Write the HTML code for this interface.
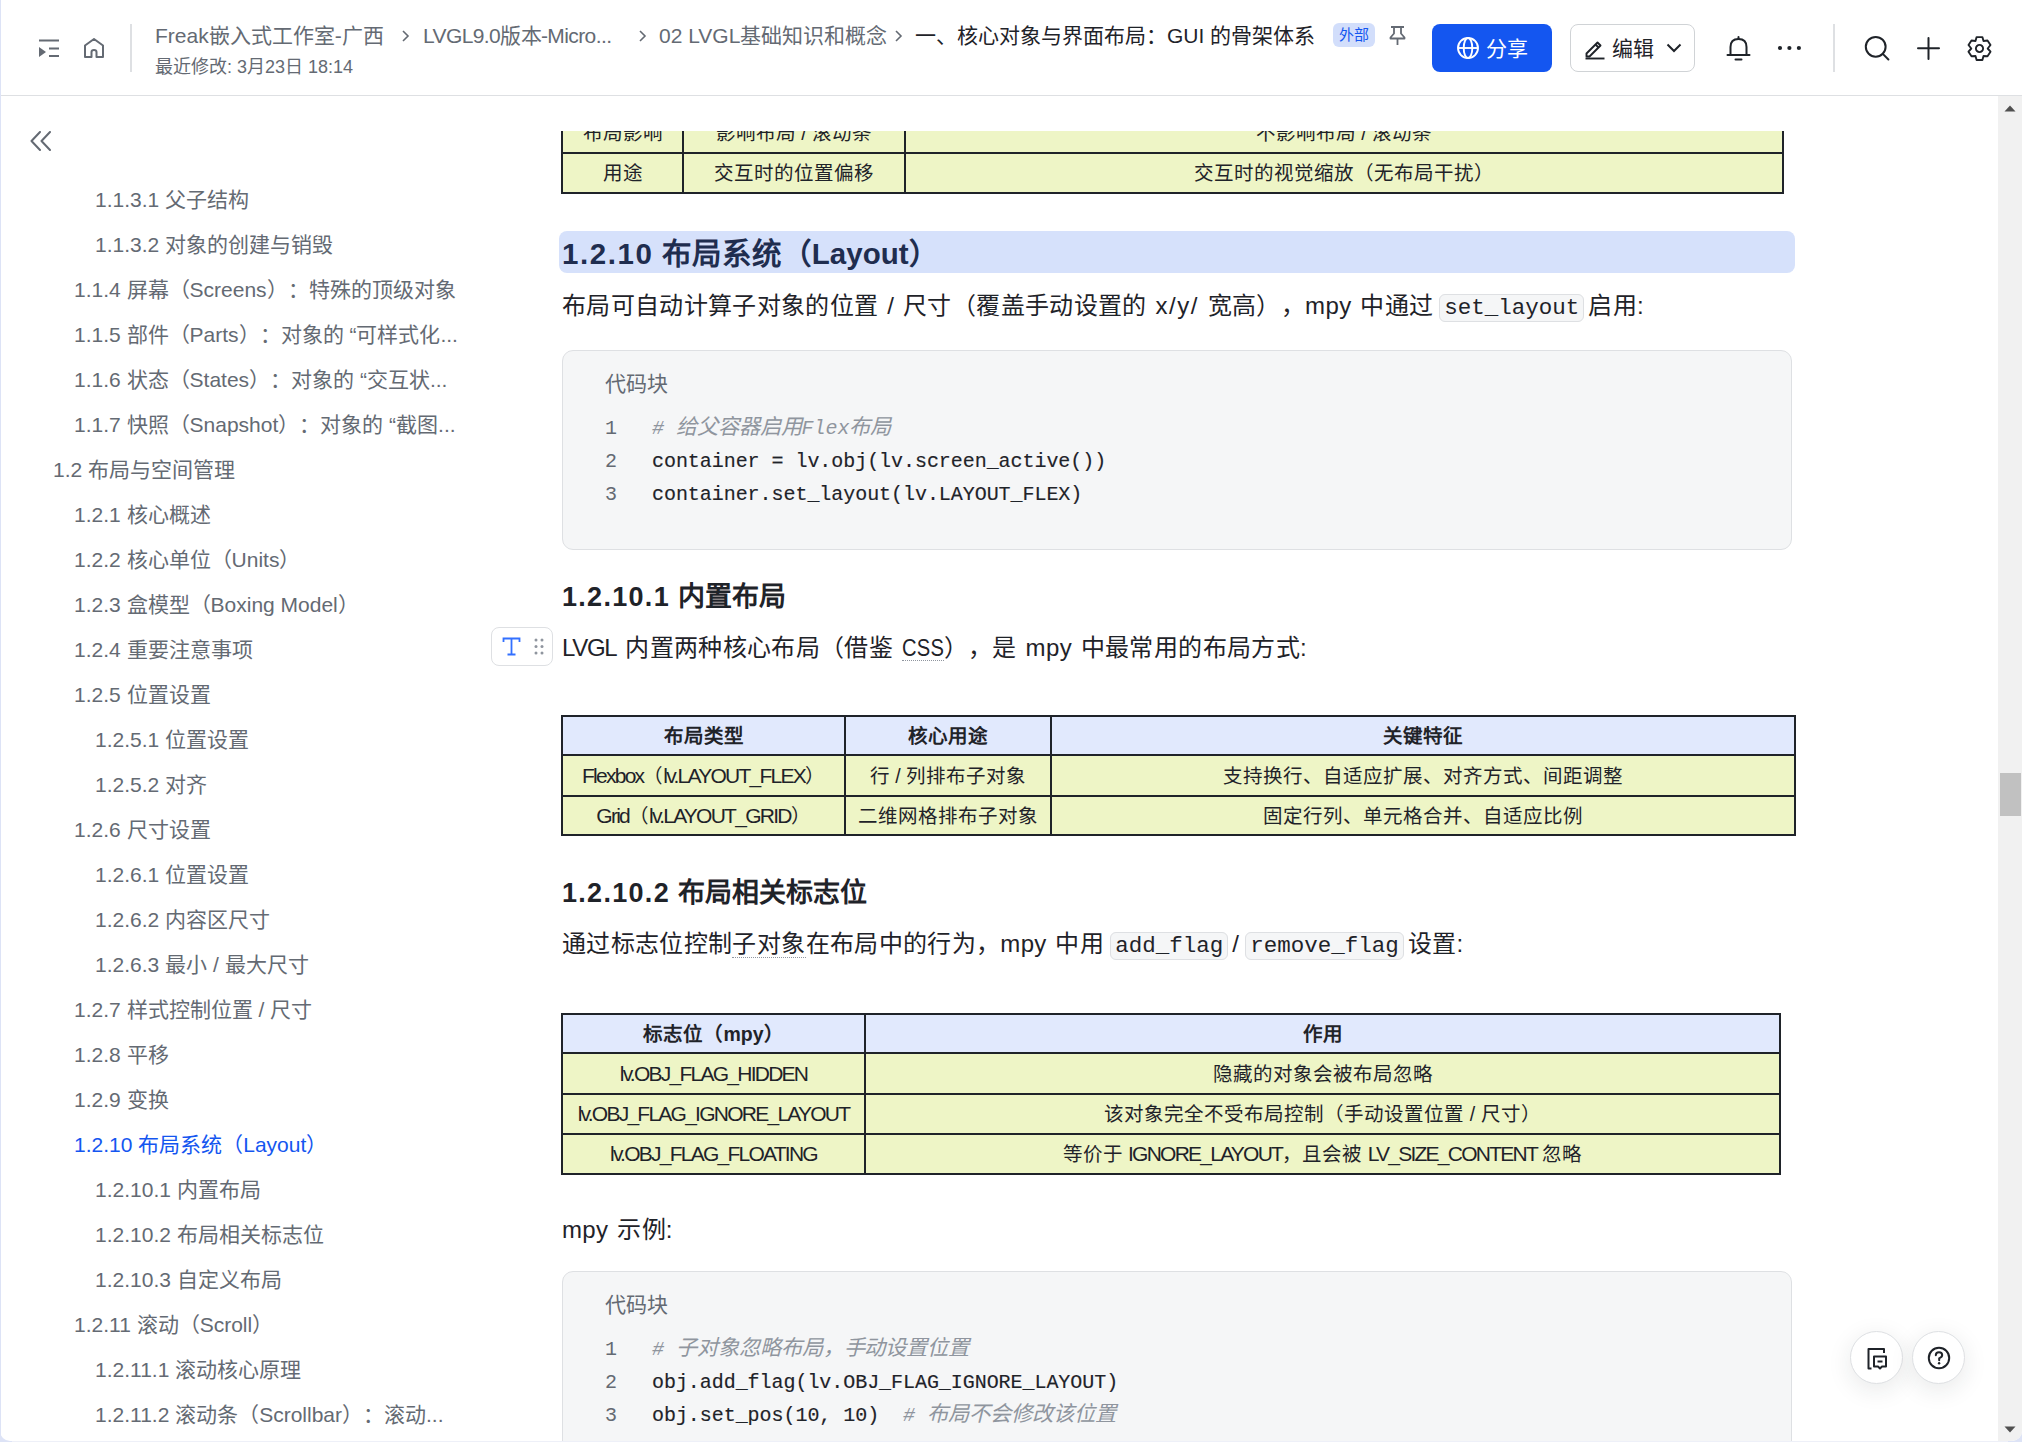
<!DOCTYPE html>
<html lang="zh-CN"><head><meta charset="utf-8">
<style>
*{box-sizing:border-box;margin:0;padding:0}
html,body{text-spacing-trim:space-all;width:2022px;height:1442px;overflow:hidden;background:#dde3f6;font-family:"Liberation Sans",sans-serif;color:#1f2329}
.abs{position:absolute}
#hdr{position:absolute;left:0;top:0;width:2022px;height:96px;border-bottom:1px solid #dee0e3;background:#fff}
#page{position:absolute;left:0;top:0;width:2022px;height:1441px;background:#fff;border-radius:0 0 10px 10px;overflow:hidden}
.crumb{position:absolute;top:20px;font-size:21px;line-height:32px;color:#646a73;white-space:nowrap}
#side .it{position:absolute;font-size:21px;line-height:30px;color:#646a73;white-space:nowrap}
.p{position:absolute;left:562px;font-size:24px;letter-spacing:0.35px;word-spacing:1.75px;line-height:39px;color:#1f2329;white-space:nowrap}
.h3{position:absolute;left:562px;font-size:29.5px;font-weight:bold;color:#1f2d4f;white-space:nowrap;line-height:40px}
.h4{position:absolute;left:562px;font-size:27px;font-weight:bold;color:#1f2329;white-space:nowrap;line-height:40px}
.dot{border-bottom:1.5px dotted #8f959e}
.code{position:absolute;left:562px;width:1230px;background:#f5f6f7;border:1.5px solid #dee0e3;border-radius:11px}
.code .lbl{position:absolute;left:42px;top:18px;font-size:21px;color:#646a73;line-height:30px}
.code .ln{position:absolute;left:42px;width:20px;font-family:"Liberation Mono",monospace;font-size:20px;color:#646a73;line-height:33px}
.code .cl{position:absolute;left:89px;font-family:"Liberation Mono",monospace;font-size:20px;letter-spacing:-0.05px;-webkit-text-stroke:0.15px currentColor;color:#1f2329;line-height:33px;white-space:pre}
.code .cm{color:#8f959e;font-style:italic;-webkit-text-stroke:0}
.cj{font-size:21.3px}
.ic{font-family:"Liberation Mono",monospace;font-size:22.5px;letter-spacing:0;background:#f5f6f7;border:1px solid #dee0e3;border-radius:6px;padding:0 4px;margin:0 4px 0 6px}
table{position:absolute;border-collapse:collapse;table-layout:fixed;font-size:19.5px;color:#1f2329}
td,th{border:2px solid #1f2329;text-align:center;background:#eef5c6;line-height:24px;padding:0;white-space:nowrap;overflow:hidden}
th{background:#e1e9fd;font-weight:bold}
.la{letter-spacing:-1.75px;font-size:21px}
th .la{letter-spacing:0;font-size:19.5px}
#sb{position:absolute;left:1998px;top:96px;width:24px;height:1346px;background:#f1f1f1}
.fb{position:absolute;top:1331px;width:53px;height:53px;border-radius:50%;background:#fff;border:1px solid #dee0e3;box-shadow:0 6px 24px rgba(31,35,41,0.10)}
</style></head><body>
<div id="page">
<div id="hdr">
  <svg class="abs" style="left:39px;top:39px" width="20" height="18" viewBox="0 0 20 18">
    <rect x="0" y="0.5" width="20" height="2" fill="#646a73"/>
    <path d="M0 8 L0 18 L7 13 Z" fill="#646a73"/>
    <rect x="10" y="8.5" width="10" height="2" fill="#646a73"/>
    <rect x="10" y="16" width="10" height="2" fill="#646a73"/>
  </svg>
  <svg class="abs" style="left:84px;top:38px" width="20" height="20" viewBox="0 0 20 20">
    <path d="M1 7.5 L10 1 L19 7.5 L19 19 L12.5 19 L12.5 14 Q12.5 12 10 12 Q7.5 12 7.5 14 L7.5 19 L1 19 Z" fill="none" stroke="#646a73" stroke-width="2" stroke-linejoin="round"/>
  </svg>
  <div class="abs" style="left:130px;top:24px;width:2px;height:48px;background:#dee0e3"></div>
  <div class="crumb" style="left:155px">Freak嵌入式工作室-广西</div>
  <svg class="abs" style="left:400px;top:29px" width="12" height="14" viewBox="0 0 12 14"><path d="M3 2 L8 7 L3 12" fill="none" stroke="#646a73" stroke-width="1.6"/></svg>
  <div class="crumb" style="left:423px;letter-spacing:-0.6px">LVGL9.0版本-Micro...</div>
  <svg class="abs" style="left:637px;top:29px" width="12" height="14" viewBox="0 0 12 14"><path d="M3 2 L8 7 L3 12" fill="none" stroke="#646a73" stroke-width="1.6"/></svg>
  <div class="crumb" style="left:659px">02 LVGL基础知识和概念</div>
  <svg class="abs" style="left:893px;top:29px" width="12" height="14" viewBox="0 0 12 14"><path d="M3 2 L8 7 L3 12" fill="none" stroke="#646a73" stroke-width="1.6"/></svg>
  <div class="crumb" style="left:915px;color:#1f2329">一、核心对象与界面布局：GUI 的骨架体系</div>
  <div class="abs" style="left:155px;top:53px;font-size:18px;line-height:28px;color:#646a73;white-space:nowrap">最近修改: 3月23日 18:14</div>
  <div class="abs" style="left:1333px;top:23px;width:42px;height:24px;background:#d2defb;border-radius:6px;font-size:15px;color:#1456f0;text-align:center;line-height:24px">外部</div>
  <svg class="abs" style="left:1389px;top:25px" width="17" height="21" viewBox="0 0 17 21"><path d="M2 2 H15 M5 2 V8.5 L1.5 12.5 V13.5 H15.5 V12.5 L12 8.5 V2 M8.5 13.5 V20" fill="none" stroke="#646a73" stroke-width="1.8" stroke-linejoin="round"/></svg>
  <div class="abs" style="left:1432px;top:24px;width:120px;height:48px;background:#1456f0;border-radius:8px"></div>
  <svg class="abs" style="left:1456px;top:37px" width="24" height="24" viewBox="0 0 24 24"><g fill="none" stroke="#fff" stroke-width="1.9"><circle cx="12" cy="11" r="10"/><ellipse cx="12" cy="11" rx="4.3" ry="10"/><path d="M2 11 H22"/></g></svg>
  <div class="abs" style="left:1486px;top:33px;font-size:21px;line-height:32px;color:#fff;white-space:nowrap">分享</div>
  <div class="abs" style="left:1570px;top:24px;width:125px;height:48px;border:1.5px solid #d0d3d6;border-radius:8px;background:#fff"></div>
  <svg class="abs" style="left:1584px;top:38px" width="22" height="22" viewBox="0 0 22 22"><g fill="none" stroke="#1f2329" stroke-width="1.9" stroke-linejoin="round"><path d="M2.5 15.5 L13.5 4.5 L16.5 7.5 L5.5 18.5 L2.5 18.5 Z"/><path d="M11.5 6.5 L14.5 9.5"/><path d="M1.5 20.5 H20.5"/></g></svg>
  <div class="abs" style="left:1612px;top:33px;font-size:21px;line-height:32px;color:#1f2329;white-space:nowrap">编辑</div>
  <svg class="abs" style="left:1666px;top:42px" width="16" height="12" viewBox="0 0 16 12"><path d="M1.5 2.5 L8 9 L14.5 2.5" fill="none" stroke="#1f2329" stroke-width="2"/></svg>
  <svg class="abs" style="left:1726px;top:36px" width="25" height="26" viewBox="0 0 25 26"><g fill="none" stroke="#1f2329" stroke-width="2" stroke-linecap="round"><path d="M4.5 19 V11 Q4.5 3 12.5 3 Q20.5 3 20.5 11 V19"/><path d="M1.5 19 H23.5"/><path d="M9.5 23.5 H15.5"/><path d="M12.5 1 V2.5"/></g></svg>
  <svg class="abs" style="left:1776px;top:44px" width="27" height="8" viewBox="0 0 27 8"><g fill="#1f2329"><circle cx="4" cy="4" r="2.1"/><circle cx="13.4" cy="4" r="2.1"/><circle cx="22.9" cy="4" r="2.1"/></g></svg>
  <div class="abs" style="left:1833px;top:24px;width:1.5px;height:48px;background:#dee0e3"></div>
  <svg class="abs" style="left:1863px;top:34px" width="28" height="28" viewBox="0 0 28 28"><g fill="none" stroke="#1f2329" stroke-width="2" stroke-linecap="round"><circle cx="12.7" cy="12.8" r="9.9"/><path d="M19.8 19.9 L25.4 25.5"/></g></svg>
  <svg class="abs" style="left:1915px;top:35px" width="27" height="27" viewBox="0 0 27 27"><g fill="none" stroke="#1f2329" stroke-width="2" stroke-linecap="round"><path d="M13.5 3 V24 M3 13.3 H24"/></g></svg>
  <svg class="abs" style="left:1966px;top:35px" width="27" height="27" viewBox="-13.5 -13.5 27 27"><g fill="none" stroke="#1f2329" stroke-width="1.9" stroke-linejoin="round"><path d="M-2.9 -11.4 L2.9 -11.4 L4.0 -7.5 L8.0 -8.0 L11.0 -3.5 L8.2 0 L11.0 3.2 L8.0 7.7 L4.0 7.5 L2.9 11.5 L-2.9 11.5 L-4.0 7.5 L-8.0 7.7 L-11.0 3.2 L-8.2 0 L-11.0 -3.5 L-8.0 -8.0 L-4.0 -7.5 Z"/><circle cx="0" cy="0" r="3.6"/></g></svg>
</div>
<div id="side">
<svg class="abs" style="left:30px;top:131px" width="21" height="20" viewBox="0 0 21 20"><path d="M10 1 L1.5 10 L10 19 M20 1 L11.5 10 L20 19" fill="none" stroke="#646a73" stroke-width="2" stroke-linecap="round" stroke-linejoin="round"/></svg>
<div class="it" style="left:95px;top:185px">1.1.3.1 父子结构</div>
<div class="it" style="left:95px;top:230px">1.1.3.2 对象的创建与销毁</div>
<div class="it" style="left:74px;top:275px">1.1.4 屏幕（Screens）：特殊的顶级对象</div>
<div class="it" style="left:74px;top:320px">1.1.5 部件（Parts）：对象的 “可样式化...</div>
<div class="it" style="left:74px;top:365px">1.1.6 状态（States）：对象的 “交互状...</div>
<div class="it" style="left:74px;top:410px">1.1.7 快照（Snapshot）：对象的 “截图...</div>
<div class="it" style="left:53px;top:455px">1.2 布局与空间管理</div>
<div class="it" style="left:74px;top:500px">1.2.1 核心概述</div>
<div class="it" style="left:74px;top:545px">1.2.2 核心单位（Units）</div>
<div class="it" style="left:74px;top:590px">1.2.3 盒模型（Boxing Model）</div>
<div class="it" style="left:74px;top:635px">1.2.4 重要注意事项</div>
<div class="it" style="left:74px;top:680px">1.2.5 位置设置</div>
<div class="it" style="left:95px;top:725px">1.2.5.1 位置设置</div>
<div class="it" style="left:95px;top:770px">1.2.5.2 对齐</div>
<div class="it" style="left:74px;top:815px">1.2.6 尺寸设置</div>
<div class="it" style="left:95px;top:860px">1.2.6.1 位置设置</div>
<div class="it" style="left:95px;top:905px">1.2.6.2 内容区尺寸</div>
<div class="it" style="left:95px;top:950px">1.2.6.3 最小 / 最大尺寸</div>
<div class="it" style="left:74px;top:995px">1.2.7 样式控制位置 / 尺寸</div>
<div class="it" style="left:74px;top:1040px">1.2.8 平移</div>
<div class="it" style="left:74px;top:1085px">1.2.9 变换</div>
<div class="it" style="left:74px;top:1130px;color:#1456f0">1.2.10 布局系统（Layout）</div>
<div class="it" style="left:95px;top:1175px">1.2.10.1 内置布局</div>
<div class="it" style="left:95px;top:1220px">1.2.10.2 布局相关标志位</div>
<div class="it" style="left:95px;top:1265px">1.2.10.3 自定义布局</div>
<div class="it" style="left:74px;top:1310px">1.2.11 滚动（Scroll）</div>
<div class="it" style="left:95px;top:1355px">1.2.11.1 滚动核心原理</div>
<div class="it" style="left:95px;top:1400px">1.2.11.2 滚动条（Scrollbar）：滚动...</div>
</div>
<div id="main">
<div class="abs" style="left:555px;top:131px;width:1240px;height:70px;overflow:hidden">
<table style="left:6px;top:-19px;width:1223px">
<colgroup><col style="width:121px"><col style="width:222px"><col></colgroup>
<tr style="height:40px"><td>布局影响</td><td>影响布局 / 滚动条</td><td>不影响布局 / 滚动条</td></tr>
<tr style="height:40px"><td>用途</td><td>交互时的位置偏移</td><td>交互时的视觉缩放（无布局干扰）</td></tr>
</table></div>
<div class="abs" style="left:559px;top:231px;width:1236px;height:42px;background:#d6e1fb;border-radius:8px"></div>
<div class="h3" style="top:234px"><span style="letter-spacing:1.6px">1.2.10</span> 布局系统（Layout）</div>
<div class="p" style="top:286px;">布局可自动计算子对象的位置 / 尺寸（覆盖手动设置的 <span style="letter-spacing:1.55px">x/y/</span> 宽高），mpy 中通过<span class="ic">set_layout</span>启用:</div>
<div class="code" style="top:350px;height:200px">
<div class="lbl">代码块</div>
<div class="ln" style="top:61px">1</div><div class="cl cm" style="top:61px"># <span class="cj">给父容器启用</span>Flex<span class="cj">布局</span></div>
<div class="ln" style="top:94px">2</div><div class="cl" style="top:94px">container = lv.obj(lv.screen_active())</div>
<div class="ln" style="top:127px">3</div><div class="cl" style="top:127px">container.set_layout(lv.LAYOUT_FLEX)</div>
</div>
<div class="h4" style="top:577px"><span style="letter-spacing:1.3px">1.2.10.1</span> 内置布局</div>
<div class="p" style="top:628px;"><span style="letter-spacing:-1.3px">LVGL</span> 内置两种核心布局（借鉴 <span class="dot" style="display:inline-block;width:42px;line-height:24px"><span style="display:inline-block;transform:scaleX(0.84);transform-origin:0 0">CSS</span></span>），是 mpy 中最常用的布局方式:</div>
<div class="abs" style="left:491px;top:627px;width:62px;height:39px;border:1.5px solid #dee0e3;border-radius:8px;background:#fff">
<svg class="abs" style="left:10px;top:9px" width="20" height="20" viewBox="0 0 20 20"><path d="M1.5 5 V1.5 H17.5 V5 M9.5 1.5 V17.5 M5.5 17.5 H13.5" fill="none" stroke="#3370ff" stroke-width="1.8"/></svg>
<svg class="abs" style="left:42px;top:10px" width="10" height="18" viewBox="0 0 10 18"><g fill="#8f959e"><circle cx="2" cy="2" r="1.5"/><circle cx="8" cy="2" r="1.5"/><circle cx="2" cy="8.5" r="1.5"/><circle cx="8" cy="8.5" r="1.5"/><circle cx="2" cy="15" r="1.5"/><circle cx="8" cy="15" r="1.5"/></g></svg>
</div>
<table style="left:561px;top:715px;width:1235px">
<colgroup><col style="width:283px"><col style="width:206px"><col></colgroup>
<tr style="height:39px"><th>布局类型</th><th>核心用途</th><th>关键特征</th></tr>
<tr style="height:41px"><td><span class="la">Flexbox</span>（<span class="la">lv.LAYOUT_FLEX</span>）</td><td>行 / 列排布子对象</td><td>支持换行、自适应扩展、对齐方式、间距调整</td></tr>
<tr style="height:39px"><td><span class="la">Grid</span>（<span class="la">lv.LAYOUT_GRID</span>）</td><td>二维网格排布子对象</td><td>固定行列、单元格合并、自适应比例</td></tr>
</table>
<div class="h4" style="top:873px"><span style="letter-spacing:1.3px">1.2.10.2</span> 布局相关标志位</div>
<div class="p" style="top:924px;">通过标志位控制<span class="dot">子对象</span>在布局中的行为，mpy 中用<span class="ic">add_flag</span>/<span class="ic">remove_flag</span>设置:</div>
<table style="left:561px;top:1013px;width:1220px">
<colgroup><col style="width:303px"><col></colgroup>
<tr style="height:39px"><th>标志位（<span class="la">mpy</span>）</th><th>作用</th></tr>
<tr style="height:41px"><td><span class="la">lv.OBJ_FLAG_HIDDEN</span></td><td>隐藏的对象会被布局忽略</td></tr>
<tr style="height:40px"><td><span class="la">lv.OBJ_FLAG_IGNORE_LAYOUT</span></td><td>该对象完全不受布局控制（手动设置位置 / 尺寸）</td></tr>
<tr style="height:40px"><td><span class="la">lv.OBJ_FLAG_FLOATING</span></td><td>等价于 <span class="la">IGNORE_LAYOUT</span>，且会被 <span class="la">LV_SIZE_CONTENT</span> 忽略</td></tr>
</table>
<div class="p" style="top:1210px;">mpy 示例:</div>
<div class="code" style="top:1271px;height:220px">
<div class="lbl">代码块</div>
<div class="ln" style="top:61px">1</div><div class="cl cm" style="top:61px"># <span class="cj">子对象忽略布局，手动设置位置</span></div>
<div class="ln" style="top:94px">2</div><div class="cl" style="top:94px">obj.add_flag(lv.OBJ_FLAG_IGNORE_LAYOUT)</div>
<div class="ln" style="top:127px">3</div><div class="cl" style="top:127px">obj.set_pos(10, 10)  <span class="cm"># <span class="cj">布局不会修改该位置</span></span></div>
</div>
</div>
<div id="sb">
<svg class="abs" style="left:6px;top:9px" width="12" height="7" viewBox="0 0 12 7"><path d="M0.5 6.5 L6 0.5 L11.5 6.5 Z" fill="#505050"/></svg>
<div class="abs" style="left:2px;top:677px;width:21px;height:43px;background:#c1c1c1"></div>
<svg class="abs" style="left:6px;top:1330px" width="12" height="7" viewBox="0 0 12 7"><path d="M0.5 0.5 L6 6.5 L11.5 0.5 Z" fill="#505050"/></svg>
</div>
<div class="fb" style="left:1850px">
<svg class="abs" style="left:15px;top:15px" width="22" height="24" viewBox="0 0 22 24"><g fill="none" stroke="#1f2329" stroke-width="2" stroke-linejoin="round"><path d="M5.5 21.5 H2.5 V2 H18 V6"/><path d="M8 9.5 H20 V19.5 H16 L14 21.5 L12 19.5 H8 Z"/><path d="M11.5 14.5 H16.5"/></g></svg>
</div>
<div class="fb" style="left:1912px">
<svg class="abs" style="left:14px;top:14px" width="24" height="24" viewBox="0 0 24 24"><g fill="none" stroke="#1f2329" stroke-width="2"><circle cx="12" cy="12" r="10.2"/><path d="M8.8 9.3 Q8.8 6.2 12 6.2 Q15.2 6.2 15.2 9 Q15.2 11 12.2 12.3 V14.2" stroke-linecap="round"/></g><circle cx="12.1" cy="17.3" r="1.2" fill="#1f2329"/></svg>
</div>
</div>
<div style="position:absolute;left:0;top:0;width:1px;height:1442px;background:#dde3f6"></div>
<div style="position:absolute;left:12px;top:1441px;width:1996px;height:1px;background:#eef0f8"></div>
</body></html>
